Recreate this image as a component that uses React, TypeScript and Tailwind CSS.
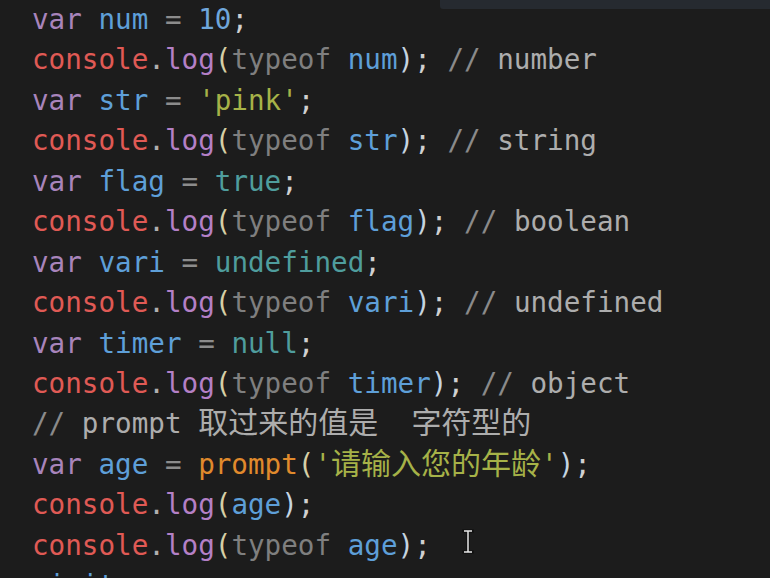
import React from "react";

type Tok = [string, string, boolean?];

const K = "#a884bb";
const ID = "#5e9fd8";
const OP = "#8c8c8c";
const NUM = "#6fa6db";
const SEMI = "#d0d0d0";
const CON = "#e05a55";
const DOT = "#b0b0b0";
const LOG = "#b480c6";
const LP = "#d6cfa6";
const RP = "#c5d4e0";
const TYPEOF = "#7f7f7f";
const CS = "#8a8a8a";
const CW = "#adadad";
const STR = "#a6b248";
const LIT = "#4f9d9d";
const FN = "#e08a2c";

const log = (inner: Tok[], comment?: string): Tok[] => {
  const t: Tok[] = [
    ["console", CON],
    [".", DOT],
    ["log", LOG],
    ["(", LP],
    ...inner,
    [")", RP],
    [";", SEMI],
  ];
  if (comment) {
    t.push([" ", CW], ["//", CS], [" " + comment, CW]);
  }
  return t;
};

const lines: Tok[][] = [
  [["var", K], [" num", ID], [" =", OP], [" 10", NUM], [";", SEMI]],
  log([["typeof", TYPEOF], [" num", ID]], "number"),
  [["var", K], [" str", ID], [" =", OP], [" 'pink'", STR], [";", SEMI]],
  log([["typeof", TYPEOF], [" str", ID]], "string"),
  [["var", K], [" flag", ID], [" =", OP], [" true", LIT], [";", SEMI]],
  log([["typeof", TYPEOF], [" flag", ID]], "boolean"),
  [["var", K], [" vari", ID], [" =", OP], [" undefined", LIT], [";", SEMI]],
  log([["typeof", TYPEOF], [" vari", ID]], "undefined"),
  [["var", K], [" timer", ID], [" =", OP], [" null", LIT], [";", SEMI]],
  log([["typeof", TYPEOF], [" timer", ID]], "object"),
  [
    ["//", CS],
    [" prompt ", CW],
    ["取过来的值是", CW, true],
    ["  ", CW],
    ["字符型的", CW, true],
  ],
  [
    ["var", K],
    [" age", ID],
    [" =", OP],
    [" prompt", FN],
    ["(", LP],
    ["'", STR],
    ["请输入您的年龄", STR, true],
    ["'", STR],
    [")", RP],
    [";", SEMI],
  ],
  log([["age", ID]]),
  log([["typeof", TYPEOF], [" age", ID]]),
  [["visit", ID]],
];

export default function App() {
  return (
    <div className="relative w-[770px] h-[578px] overflow-hidden bg-[#1c1c1c]">
      <div className="absolute top-0 left-[440px] w-[330px] h-[9px] bg-[#262a30] rounded-bl-[3px]" />
      <div
        className="pl-[32px] pt-0 text-[27.6px] leading-[40.45px] whitespace-pre"
        style={{ fontFamily: '"DejaVu Sans Mono", "Noto Sans CJK SC", monospace' }}
      >
        {lines.map((line, i) => (
          <div key={i} className="h-[40.45px]">
            {line.map(([text, color, cjk], j) =>
              cjk ? (
                <span
                  key={j}
                  className="text-[30px] leading-none"
                  style={{ color, fontFamily: '"Noto Sans CJK SC", sans-serif' }}
                >
                  {text}
                </span>
              ) : (
                <span key={j} style={{ color }}>
                  {text}
                </span>
              )
            )}
          </div>
        ))}
      </div>
      <svg
        className="absolute left-[461px] top-[529px]"
        width="14"
        height="25"
        viewBox="0 0 14 25"
      >
        <g stroke="#111" strokeWidth="3.5" strokeLinecap="square" fill="none">
          <path d="M3 2 H11 M7 2 V23 M3 23 H11" />
        </g>
        <g stroke="#e8e8e8" strokeWidth="1.5" fill="none">
          <path d="M3 2 H11 M7 2 V23 M3 23 H11" />
        </g>
      </svg>
    </div>
  );
}
